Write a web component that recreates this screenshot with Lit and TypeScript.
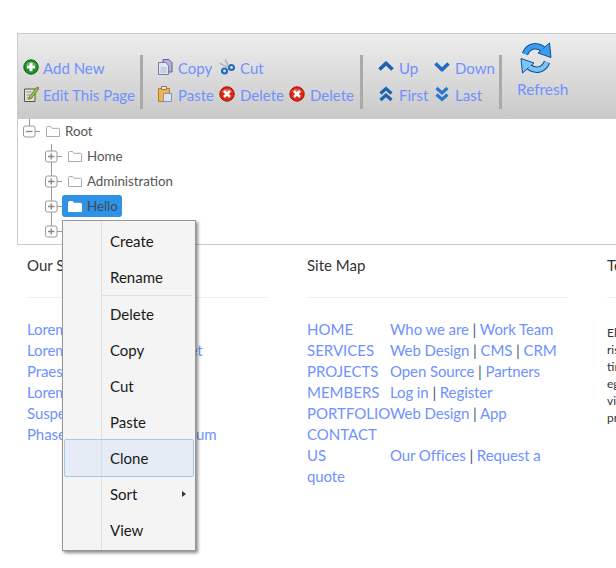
/**
 * <app-root> — tree admin page: toolbar, folder tree with an open context
 * menu, and the page footer underneath.
 */

import { LitElement, html, css, svg, nothing } from "lit";
import { customElement } from "lit/decorators.js";

const ICONS = {
  add: svg`<circle cx="8" cy="8" r="7.2" fill="#1c9128" stroke="#0e5f18"/><path d="M2.5 6a6 5 0 0 1 11 0z" fill="#6fd86a" opacity=".6"/><path d="M8 3.8v8.4M3.8 8h8.4" stroke="#fff" stroke-width="3"/>`,
  edit: svg`<path d="M1.5 3h10.5v12.5H1.5z" fill="#e4e0da" stroke="#5f5048"/><path d="M3.5 6h5M3.5 9h4M3.5 12h6" stroke="#8d8794"/><path d="M6.5 10.5L13.5 1.5l2 1.8-7 9-3 1.2z" fill="#8ac43e" stroke="#4f7a22" stroke-width=".7"/><path d="M13.5 1.5l2 1.8 .8-2.6z" fill="#d84a3a"/>`,
  copy: svg`<path d="M6 .5h6l3 3V13H6z" fill="#b3b0da" stroke="#5f5c96"/><path d="M1.5 3.5h7l3 3v9h-10z" fill="#dfe6f2" stroke="#76809f"/><path d="M3.5 9h6M3.5 11h6M3.5 13h6" stroke="#a9b6d0"/>`,
  cut: svg`<path d="M6 .5l4.500 8M.5 4l8 4" stroke="#b4b8c0" stroke-width="1.8"/><circle cx="5.5" cy="12" r="2.5" fill="none" stroke="#2468bd" stroke-width="2.2"/><circle cx="12.5" cy="8.5" r="2.5" fill="none" stroke="#2468bd" stroke-width="2.2"/>`,
  paste: svg`<path d="M1.5 2.5h11v13h-11z" fill="#f0b354" stroke="#b47c2a"/><path d="M4.5 .5h5v3h-5z" fill="#ece6cc" stroke="#8c7a50"/><path d="M6.5 7.5h8v8h-8z" fill="#dde3ef" stroke="#8a93ad"/>`,
  del: svg`<circle cx="8" cy="8" r="7.2" fill="#dc2717" stroke="#a31409"/><path d="M2.5 6a6 5 0 0 1 11 0z" fill="#f6836e" opacity=".6"/><path d="M5 5l6 6M11 5l-6 6" stroke="#fff" stroke-width="2.6"/>`,
  up: svg`<path d="M1.5 10.5L8 4.2l6.5 6.3" fill="none" stroke="#1b62b4" stroke-width="3.6" stroke-linejoin="round"/>`,
  down: svg`<path d="M1.5 4.5L8 10.8l6.5-6.3" fill="none" stroke="#1f6cc2" stroke-width="3.6" stroke-linejoin="round"/>`,
  first: svg`<path d="M2.5 7.5L8 2.5l5.5 5M2.5 14L8 9l5.5 5" fill="none" stroke="#1b62b4" stroke-width="3.1"/>`,
  last: svg`<path d="M2.5 2L8 7l5.5-5M2.5 8.5L8 13.5l5.5-5" fill="none" stroke="#2a78cc" stroke-width="3.1"/>`,
};

type IconName = keyof typeof ICONS;

const icon = (name: IconName) =>
  html`<svg class="icon" viewBox="0 0 16 16" width="16" height="16">${ICONS[name]}</svg>`;

const tool = (name: IconName, label: string) =>
  html`<span class="tool">${icon(name)}<span>${label}</span></span>`;

const folder = (cls = "") => html`<svg class="folder ${cls}" viewBox="0 0 14 11" width="14" height="11">
  <path d="M.5 10.5V1.5q0-1 1-1h3l1.5 1.8h6.5q1 0 1 1v7.2z" />
</svg>`;

/** Connector cell: expander box plus the tree lines running through it. */
const connector = (open: boolean, from: number, to: number) => svg`
  <svg class="conn" viewBox="0 0 22 25" width="22" height="25">
    <path d="M11.5 ${from}V${to}M17 12.5h5" stroke="#999" fill="none"/>
    <rect x="5.5" y="7" width="11.5" height="11" rx="2" fill="#fff" stroke="#999"/>
    <path d="M8 12.5h6.5${open ? "" : "M11.25 9.5v6"}" stroke="#888" stroke-width="1.4" fill="none"/>
  </svg>`;

interface MenuItem {
  label: string;
  hover?: boolean;
  sub?: boolean;
  sepAfter?: boolean;
}

const MENU: MenuItem[] = [
  { label: "Create" },
  { label: "Rename", sepAfter: true },
  { label: "Delete" },
  { label: "Copy" },
  { label: "Cut" },
  { label: "Paste" },
  { label: "Clone", hover: true },
  { label: "Sort", sub: true },
  { label: "View" },
];

const SERVICES = [
  "Lorem ipsum",
  "Lorem ipsum dolor sit amet",
  "Praesent",
  "Lorem ipsum",
  "Suspendisse",
  "Phasellus fermentum a ipsum",
];

const SITE_MAP = ["HOME", "SERVICES", "PROJECTS", "MEMBERS", "PORTFOLIO", "CONTACT US"];

const SITE_LINKS = [
  ["Who we are", "Work Team"],
  ["Web Design", "CMS", "CRM"],
  ["Open Source", "Partners"],
  ["Log in", "Register"],
  ["Web Design", "App"],
  [],
  ["Our Offices", "Request a quote"],
];

@customElement("app-root")
export class AppRoot extends LitElement {
  static styles = css`
    :host {
      display: block;
      position: relative;
      width: 616px;
      height: 568px;
      overflow: hidden;
      background: #fff;
      font-family: Lato, "Open Sans", sans-serif;
      color: #333;
    }

    .panel {
      width: 640px;
      margin: 33px 0 0 17px;
      border: 1px solid #ccc;
      border-right: none;
    }

    .toolbar {
      display: flex;
      height: 85px;
      padding-top: 21px;
      box-sizing: border-box;
      background: linear-gradient(#ededed, #c9c9c9);
      font-size: 15px;
      color: #7091ff;
    }

    .group {
      display: grid;
      grid-auto-rows: 27px;
      align-items: center;
      height: 54px;
      box-sizing: border-box;
      margin-top: -1px;
    }

    .g1 { padding-left: 5px; width: 122px; }
    .g2 { padding-left: 14px; width: 217px; grid-template-columns: 62px 70px 64px; }
    .g3 { padding-left: 15px; width: 136px; grid-template-columns: 56px 60px; }

    .sep {
      width: 3px;
      height: 54px;
      background: #aaa;
      flex: none;
    }

    .tool {
      display: flex;
      align-items: center;
      gap: 4px;
      white-space: nowrap;
    }

    .g2 .tool, .g3 .tool { gap: 5px; }

    .icon { flex: none; margin-bottom: 2px; }

    .refresh {
      display: flex;
      flex-direction: column;
      align-items: flex-start;
      width: 51px;
      margin: -13px 0 0 15px;
      font-size: 15.4px;
    }

    .refresh svg { margin-left: 3px; }
    .refresh span { margin-top: 6px; }

    .tree {
      height: 125px;
      overflow: hidden;
      font-size: 13.3px;
      color: #555;
    }

    .row {
      display: flex;
      height: 25px;
      align-items: flex-start;
    }

    .row.child { padding-left: 22px; }

    .label {
      display: flex;
      align-items: center;
      gap: 5px;
      height: 22px;
      margin-top: 1px;
      padding: 0 4px 0 6px;
      border-radius: 3px;
      white-space: nowrap;
    }

    .label.selected { background: #3092e4; color: #3a4a5a; }

    .folder { fill: #fff; stroke: #aaa; flex: none; }
    .folder.on { stroke: #fff; }

    .conn { flex: none; }

    .footer {
      display: grid;
      grid-template-columns: 240px 260px 240px;
      gap: 40px;
      padding: 9px 0 0 27px;
      width: 800px;
    }

    h4 {
      margin: 0;
      height: 43px;
      border-bottom: 1px solid #eee;
      font-size: 15px;
      font-weight: 400;
      line-height: 22px;
      color: #333;
    }

    .links {
      margin-top: 21px;
      font-size: 15px;
      line-height: 21px;
      letter-spacing: -0.1px;
      color: #7091ff;
    }

    .links .bar { color: #44586e; }

    .sitemap { float: left; width: 83px; letter-spacing: 0; }

    .line { min-height: 21px; }

    .copy {
      margin-top: 26px;
      font-size: 12px;
      line-height: 17px;
      width: 240px;
      color: #333;
    }

    .menu {
      position: absolute;
      left: 62px;
      top: 220px;
      width: 134px;
      box-sizing: border-box;
      padding: 2px 1px;
      border: 1px solid #979797;
      background: #f4f4f4 linear-gradient(#e0e0e0, #e0e0e0) 38px 0 / 1px 100% no-repeat;
      box-shadow: 2px 2px 3px rgba(0, 0, 0, 0.45);
      font-size: 15px;
      color: #1a1a1a;
    }

    .item {
      display: flex;
      align-items: center;
      justify-content: space-between;
      height: 36px;
      padding: 0 7px 0 45px;
      box-sizing: border-box;
      border: 1px solid transparent;
      border-radius: 2px;
    }

    .item.hover {
      margin: -1px 0;
      height: 38px;
      background: rgba(200, 220, 245, 0.35);
      border-color: #a6c8e2;
    }

    .menusep {
      height: 1px;
      margin: 0 2px 0 38px;
      background: #e0e0e0;
    }

    .arrow {
      width: 0;
      height: 0;
      border-left: 4px solid #333;
      border-top: 3.5px solid transparent;
      border-bottom: 3.5px solid transparent;
    }
  `;

  private _treeRow(label: string, from: number, to: number, selected = false) {
    return html`<div class="row child">
      ${connector(false, from, to)}
      <span class="label ${selected ? "selected" : ""}">${folder(selected ? "on" : "")}${label}</span>
    </div>`;
  }

  private _linkLine(parts: string[]) {
    return html`<div class="line">${parts.map(
      (p, i) => html`${i ? html` <span class="bar">|</span> ` : nothing}${p}`,
    )}</div>`;
  }

  render() {
    return html`
      <div class="panel">
        <div class="toolbar">
          <div class="group g1">
            ${tool("add", "Add New")}
            ${tool("edit", "Edit This Page")}
          </div>
          <div class="sep"></div>
          <div class="group g2">
            ${tool("copy", "Copy")}
            ${tool("cut", "Cut")}
            <span></span>
            ${tool("paste", "Paste")}
            ${tool("del", "Delete")}
            ${tool("del", "Delete")}
          </div>
          <div class="sep"></div>
          <div class="group g3">
            ${tool("up", "Up")}
            ${tool("down", "Down")}
            ${tool("first", "First")}
            ${tool("last", "Last")}
          </div>
          <div class="sep"></div>
          <div class="refresh">
            <svg viewBox="0 0 32 32" width="32" height="32" fill="none">
              <path d="M5 12C8 4 16 2 23 7" stroke="#11508f" stroke-width="6.5"/>
              <path d="M18 11l13 4.500L29.500 1z" fill="#3b9df0" stroke="#11508f"/>
              <path d="M5 12C8 4 16 2 23 7" stroke="#3b9df0" stroke-width="4.500"/>
              <path d="M27 20C24 28 16 30 9 25" stroke="#11508f" stroke-width="6.500"/>
              <path d="M14 21L1 16.500 2.500 31z" fill="#7cc4f7" stroke="#11508f"/>
              <path d="M27 20C24 28 16 30 9 25" stroke="#7cc4f7" stroke-width="4.500"/>
            </svg>
            <span>Refresh</span>
          </div>
        </div>
        <div class="tree">
          <div class="row">
            ${connector(true, 0, 7)}
            <span class="label">${folder()}Root</span>
          </div>
          ${this._treeRow("Home", 0, 25)}
          ${this._treeRow("Administration", 0, 25)}
          ${this._treeRow("Hello", 0, 25, true)}
          ${this._treeRow("World", 0, 12)}
        </div>
      </div>

      <div class="footer">
        <section>
          <h4>Our Services</h4>
          <div class="links">${SERVICES.map((s) => html`<div class="line">${s}</div>`)}</div>
        </section>
        <section>
          <h4>Site Map</h4>
          <div class="links">
            <div class="sitemap">${SITE_MAP.map((s) => html`<div>${s}</div>`)}</div>
            ${SITE_LINKS.map((l) => this._linkLine(l))}
          </div>
        </section>
        <section>
          <h4>Testimonials</h4>
          <div class="copy">
            Elit sed do eiusmod tempor<br />risus commodo viverra<br />tincidunt maecenas<br />
            eget accumsan lacus<br />vitae ultrices gravida<br />praesent
          </div>
        </section>
      </div>

      <div class="menu">
        ${MENU.map(
          (m) => html`<div class="item ${m.hover ? "hover" : ""}">
              <span>${m.label}</span>${m.sub ? html`<span class="arrow"></span>` : nothing}
            </div>
            ${m.sepAfter ? html`<div class="menusep"></div>` : nothing}`,
        )}
      </div>
    `;
  }
}
